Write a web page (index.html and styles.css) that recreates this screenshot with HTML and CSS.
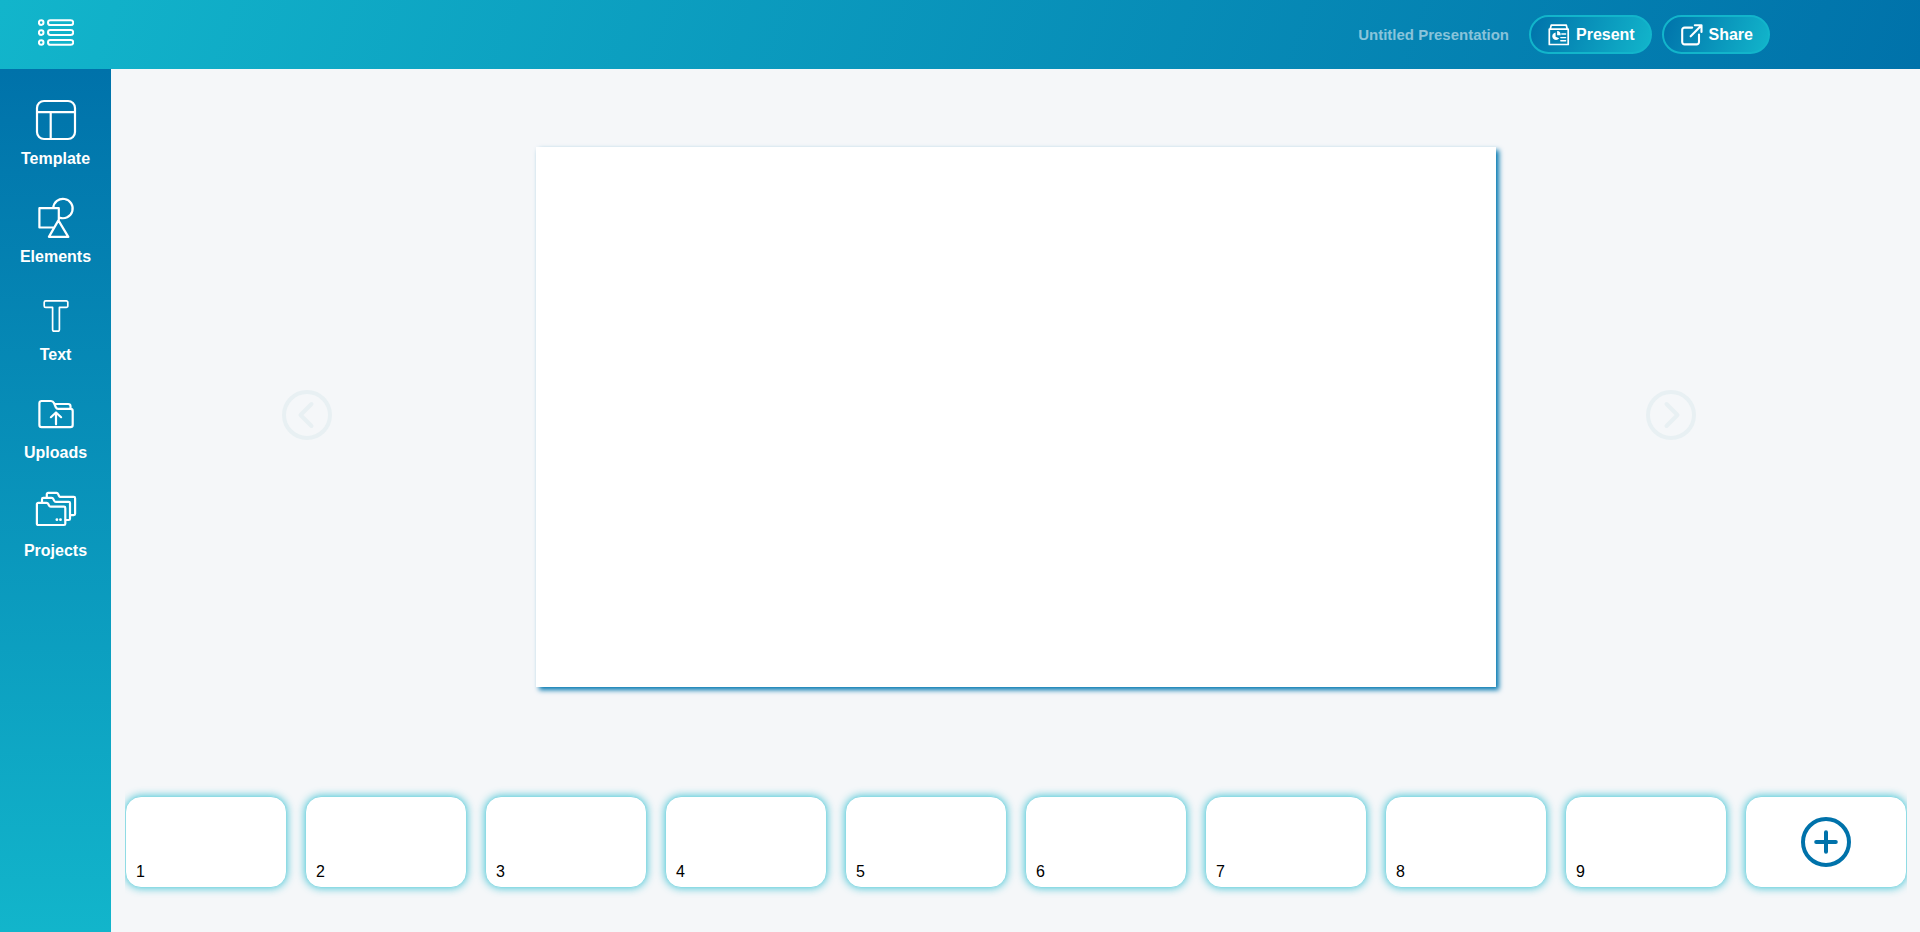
FILE: index.html
```html
<!DOCTYPE html>
<html lang="en">
<head>
<meta charset="utf-8">
<title>Untitled Presentation</title>
<link rel="stylesheet" href="styles.css">
</head>
<body>
<header class="topbar">
  <svg class="menu-icon" viewBox="0 0 36 28">
    <circle cx="3.2" cy="3.6" r="2.3"/><rect x="10" y="1.2" width="25.200" height="4.900" rx="2.400"/>
    <circle cx="3.2" cy="13.600" r="2.300"/><rect x="10" y="11.100" width="25.200" height="4.900" rx="2.400"/>
    <circle cx="3.2" cy="23.500" r="2.300"/><rect x="10" y="20.900" width="25.200" height="4.900" rx="2.400"/>
  </svg>
  <div class="actions">
    <span class="title">Untitled Presentation</span>
    <button class="btn present">
      <svg class="btn-icon" viewBox="0 0 22 22">
        <path d="M1.300 5.200h18.900v15.300H1.300zM2.200 5.200l1-4h15.100l1 4" stroke-width="1.700"/>
        <path d="M13.800 10h3.800M12.800 13.600h4.800M12.800 16.800h4.800" stroke-width="1.400"/>
        <path class="solid" d="M7.600 8.400v4.400l3.600 1.500a3.800 3.800 0 1 1-3.600-5.900zM9.100 7.100a3.900 3.900 0 0 1 3.600 4.200H9.100z"/>
      </svg>Present</button>
    <button class="btn share">
      <svg class="btn-icon" viewBox="0 0 22 22">
        <path d="M11.200 3.600H3.600a2.400 2.400 0 0 0-2.400 2.400v12a2.400 2.400 0 0 0 2.400 2.400h12a2.400 2.400 0 0 0 2.400-2.400v-7.400M9.700 12.300 20.300 1.400M13.800 1.200h6.700v6.700" stroke-width="2.100"/>
      </svg>Share</button>
  </div>
</header>
<div class="body">
  <nav class="sidebar">
    <a class="tool"><svg class="tool-icon" viewBox="0 0 40 40"><rect x="1" y="1" width="38" height="38" rx="7"/><path d="M1 12.200h38M14.700 12.200V39"/></svg>Template</a>
    <a class="tool"><svg class="tool-icon" viewBox="0 0 40 40"><path d="M17.300 10a9.700 9.700 0 1 1 6 9.500M22.800 22V10.200H3.400v19.300h14.800M22.400 22.400 12.900 38.900h19.400z"/></svg>Elements</a>
    <a class="tool"><svg class="tool-icon thin" viewBox="0 0 40 40"><path d="M9.700 4.900h20.600a1.500 1.500 0 0 1 1.500 1.500v3.500a1.500 1.500 0 0 1-1.500 1.500h-6.900v22a1.700 1.700 0 0 1-1.700 1.700h-3.400a1.700 1.700 0 0 1-1.700-1.700v-22H9.700a1.500 1.500 0 0 1-1.500-1.500V6.400a1.500 1.500 0 0 1 1.500-1.500z"/></svg>Text</a>
    <a class="tool"><svg class="tool-icon" viewBox="0 0 40 40"><path d="M5.600 7h9.400c1.800 0 2.500.8 3.100 2.200l1.700 4c.5 1.200 1.100 1.700 2.300 1.700h12.400a2.200 2.200 0 0 1 2.200 2.200V31a2.200 2.200 0 0 1-2.200 2.200H5.600A2.200 2.200 0 0 1 3.400 31V9.200A2.200 2.200 0 0 1 5.600 7zM18.500 10h13.800a2.200 2.200 0 0 1 2.200 2.200V15M20 30.300V19.200M14.900 23.200 20 18.500l5.100 4.700"/></svg>Uploads</a>
    <a class="tool"><svg class="tool-icon" viewBox="0 0 40 40"><path d="M2.200 10.800h8.400c1 0 1.300.3 1.700 1.200l.7 1.500c.4.900.9 1.200 1.800 1.200h13.200a1.300 1.300 0 0 1 1.300 1.300v15.700a1.300 1.300 0 0 1-1.300 1.300H2.200a1.300 1.300 0 0 1-1.300-1.300V12.100a1.300 1.300 0 0 1 1.300-1.300z"/><path d="M6 10.500V7.200a1.300 1.300 0 0 1 1.300-1.300h8.400c1 0 1.300.3 1.700 1.200l.7 1.500c.4.900.9 1.200 1.800 1.200h12.800A1.300 1.300 0 0 1 34 11.100v15.600a1.300 1.300 0 0 1-1.300 1.300h-3.200M10.800 5.500V2.200A1.300 1.300 0 0 1 12.100.9h8.400c1 0 1.300.3 1.700 1.200l.7 1.600c.4.900.9 1.200 1.800 1.200h13.100a1.300 1.300 0 0 1 1.300 1.300v15.600a1.300 1.300 0 0 1-1.300 1.300h-3.500"/><circle class="solid" cx="20.900" cy="27.700" r="1.400"/><circle class="solid" cx="24.500" cy="27.700" r="1.400"/></svg>Projects</a>
  </nav>
  <main class="workspace">
    <section class="stage">
      <svg class="round-icon faint" viewBox="0 0 50 50"><circle cx="25" cy="25" r="23"/><path d="M29.500 14 18.500 25l11 11"/></svg>
      <div class="slide"></div>
      <svg class="round-icon faint" viewBox="0 0 50 50"><circle cx="25" cy="25" r="23"/><path d="M20.500 14l11 11-11 11"/></svg>
    </section>
    <section class="strip">
      <div class="thumb">1</div>
      <div class="thumb">2</div>
      <div class="thumb">3</div>
      <div class="thumb">4</div>
      <div class="thumb">5</div>
      <div class="thumb">6</div>
      <div class="thumb">7</div>
      <div class="thumb">8</div>
      <div class="thumb">9</div>
      <div class="thumb add"><svg class="round-icon" viewBox="0 0 50 50"><circle cx="25" cy="25" r="23"/><path d="M25 15.200v19.600M15.200 25h19.600"/></svg></div>
    </section>
  </main>
</div>
</body>
</html>
```
FILE: styles.css
```css
* { box-sizing: border-box; }
body {
  margin: 0;
  height: 932px;
  display: flex;
  flex-direction: column;
  overflow: hidden;
  background: #f5f7f9;
  font: 16px "Liberation Sans", Arial, sans-serif;
}
svg {
  display: block;
  flex: none;
  fill: none;
  stroke: #fff;
  stroke-width: 2.2;
  stroke-linecap: round;
  stroke-linejoin: round;
}
.solid { fill: #fff; stroke: none; }
.topbar {
  height: 69px;
  flex: none;
  display: flex;
  justify-content: space-between;
  align-items: center;
  padding: 0 150px 0 37.5px;
  background: linear-gradient(110deg, #12b5cb, #0072aa);
}
.menu-icon { width: 36px; height: 28px; margin-bottom: 3px; stroke-width: 2; }
.actions { display: flex; align-items: center; }
.title {
  margin-right: 20px;
  font-size: 15px;
  font-weight: bold;
  color: rgba(255, 255, 255, .53);
}
.btn {
  display: flex;
  align-items: center;
  gap: 6px;
  height: 39px;
  padding: 0 0 0 17px;
  border: 2px solid #12b5cb;
  border-radius: 20px;
  background: linear-gradient(110deg, #0072aa, #12b5cb);
  color: #fff;
  font: bold 16px "Liberation Sans", Arial, sans-serif;
}
.present { width: 123px; margin-right: 10px; }
.share { width: 108px; padding-left: 16.5px; }
.btn-icon { width: 22px; height: 22px; }
.body { flex: 1; display: flex; min-height: 0; }
.sidebar {
  width: 111px;
  flex: none;
  display: flex;
  flex-direction: column;
  align-items: center;
  padding: 31px 0 0;
  background: linear-gradient(#0072aa, #12b5cb);
}
.tool {
  height: 98px;
  display: flex;
  flex-direction: column;
  align-items: center;
  gap: 10px;
  color: #fff;
  font-weight: bold;
  line-height: 18px;
}
.tool-icon { width: 40px; height: 40px; overflow: visible; margin-left: 1px; }
.thin { stroke-width: 1.7; }
.workspace {
  flex: 1;
  min-width: 0;
  display: flex;
  flex-direction: column;
  padding-top: 78px;
}
.stage {
  height: 540px;
  display: flex;
  align-items: center;
  padding-left: 171px;
}
.slide {
  width: 960px;
  height: 540px;
  margin: 0 150px 0 204px;
  background: #fff;
  box-shadow: 3px 3px 5px #0077b0;
}
.round-icon { width: 50px; height: 50px; stroke: #0072aa; stroke-width: 4; }
.faint { stroke: #e8f0f3; margin-bottom: 4px; }
.strip {
  display: flex;
  gap: 18px;
  width: 1782px;
  margin: 89px 0 0 14px;
  padding: 20px 0;
  overflow: hidden;
}
.thumb {
  width: 162px;
  height: 92px;
  flex: none;
  display: flex;
  align-items: flex-end;
  padding: 0 10px 6px;
  border: 1px solid #8fdbe4;
  border-radius: 16px;
  background: #fff;
  box-shadow: 0 0 8px rgba(18, 181, 203, .8);
}
.add { align-items: center; justify-content: center; padding: 0; }
```
